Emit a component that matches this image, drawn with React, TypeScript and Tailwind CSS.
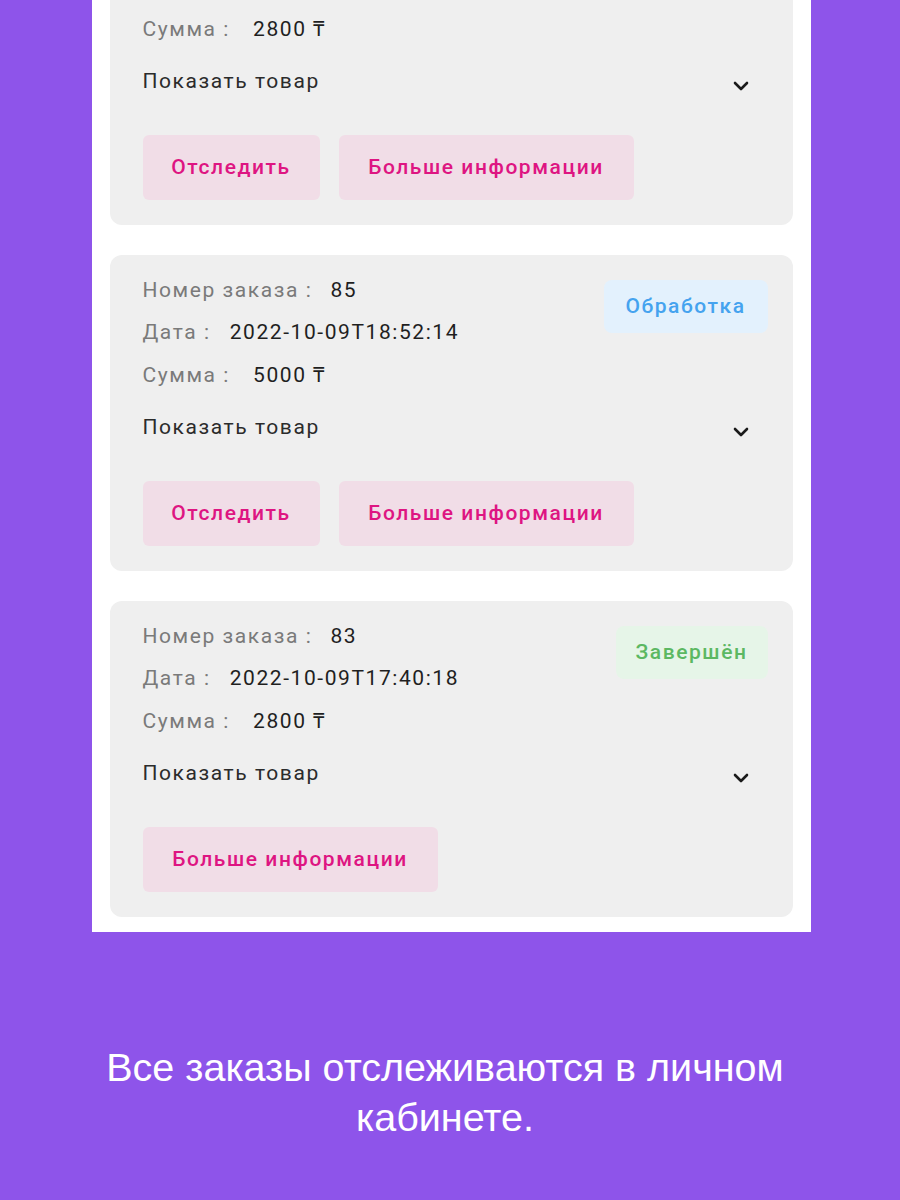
import { ChevronDown } from "lucide-react";

type Order = {
  id: string;
  date: string;
  sum: string;
  status: "processing" | "done";
  canTrack: boolean;
};

const orders: Order[] = [
  { id: "84", date: "2022-10-09T19:10:42", sum: "2800 ₸", status: "processing", canTrack: true },
  { id: "85", date: "2022-10-09T18:52:14", sum: "5000 ₸", status: "processing", canTrack: true },
  { id: "83", date: "2022-10-09T17:40:18", sum: "2800 ₸", status: "done", canTrack: false },
];

function StatusBadge({ status }: { status: Order["status"] }) {
  if (status === "processing") {
    return (
      <div className="flex h-[53px] w-[164px] items-center justify-center rounded-lg bg-[#e3f1fd] text-[21px] font-medium text-[#45a3ef]">
        Обработка
      </div>
    );
  }
  return (
    <div className="flex h-[53px] w-[152px] items-center justify-center rounded-lg bg-[#e6f5e8] text-[21px] font-medium text-[#5cb862]">
      Завершён
    </div>
  );
}

function OrderCard({ order, first }: { order: Order; first?: boolean }) {
  return (
    <div
      className={
        "rounded-xl bg-[#efefef] pb-[25px] pl-[33px] pr-[25px] pt-[22px] " +
        (first ? "-mt-[91px]" : "")
      }
    >
      <div className="flex items-start justify-between">
        <div className="flex flex-col">
          <div className="flex h-[28px] items-center">
            <span className="text-[#7a7a7a]">Номер заказа :</span>
            <span className="ml-[18px] text-[#1f1f1f]">{order.id}</span>
          </div>
          <div className="mt-[14px] flex h-[28px] items-center">
            <span className="text-[#7a7a7a]">Дата :</span>
            <span className="ml-[19px] text-[#1f1f1f]">{order.date}</span>
          </div>
          <div className="mt-[15px] flex h-[28px] items-center">
            <span className="text-[#7a7a7a]">Сумма :</span>
            <span className="ml-[23px] text-[#1f1f1f]">{order.sum}</span>
          </div>
        </div>
        <div className="mt-[3px]">
          <StatusBadge status={order.status} />
        </div>
      </div>

      <div className="mt-[24px] flex h-[28px] items-center justify-between">
        <span className="text-[#2b2b2b]">Показать товар</span>
        <ChevronDown className="mr-[15px] mt-[8px] h-[24px] w-[24px] text-[#1a1a1a]" strokeWidth={2.6} />
      </div>

      <div className="mt-[39px] flex gap-[19px]">
        {order.canTrack && (
          <button className="flex h-[65px] w-[177px] items-center justify-center rounded-md bg-[#f1dde7] text-[21px] font-medium text-[#de1582]">
            Отследить
          </button>
        )}
        <button className="flex h-[65px] w-[295px] items-center justify-center rounded-md bg-[#f1dde7] text-[21px] font-medium text-[#de1582]">
          Больше информации
        </button>
      </div>
    </div>
  );
}

export default function App() {
  return (
    <main className="flex h-[1200px] w-[900px] flex-col items-center bg-[#8e54ea] font-['Roboto',sans-serif]">
      <section className="ml-[2px] flex h-[932px] w-[719px] flex-col gap-[30px] overflow-hidden bg-white px-[18px] text-[21px] tracking-[0.075em]">
        {orders.map((order, i) => (
          <OrderCard key={order.id} order={order} first={i === 0} />
        ))}
      </section>

      <p className="mr-[10px] mt-[110px] w-[740px] text-center font-['Liberation_Sans',sans-serif] text-[39.5px] leading-[50px] text-white">
        Все заказы отслеживаются в личном кабинете.
      </p>
    </main>
  );
}
